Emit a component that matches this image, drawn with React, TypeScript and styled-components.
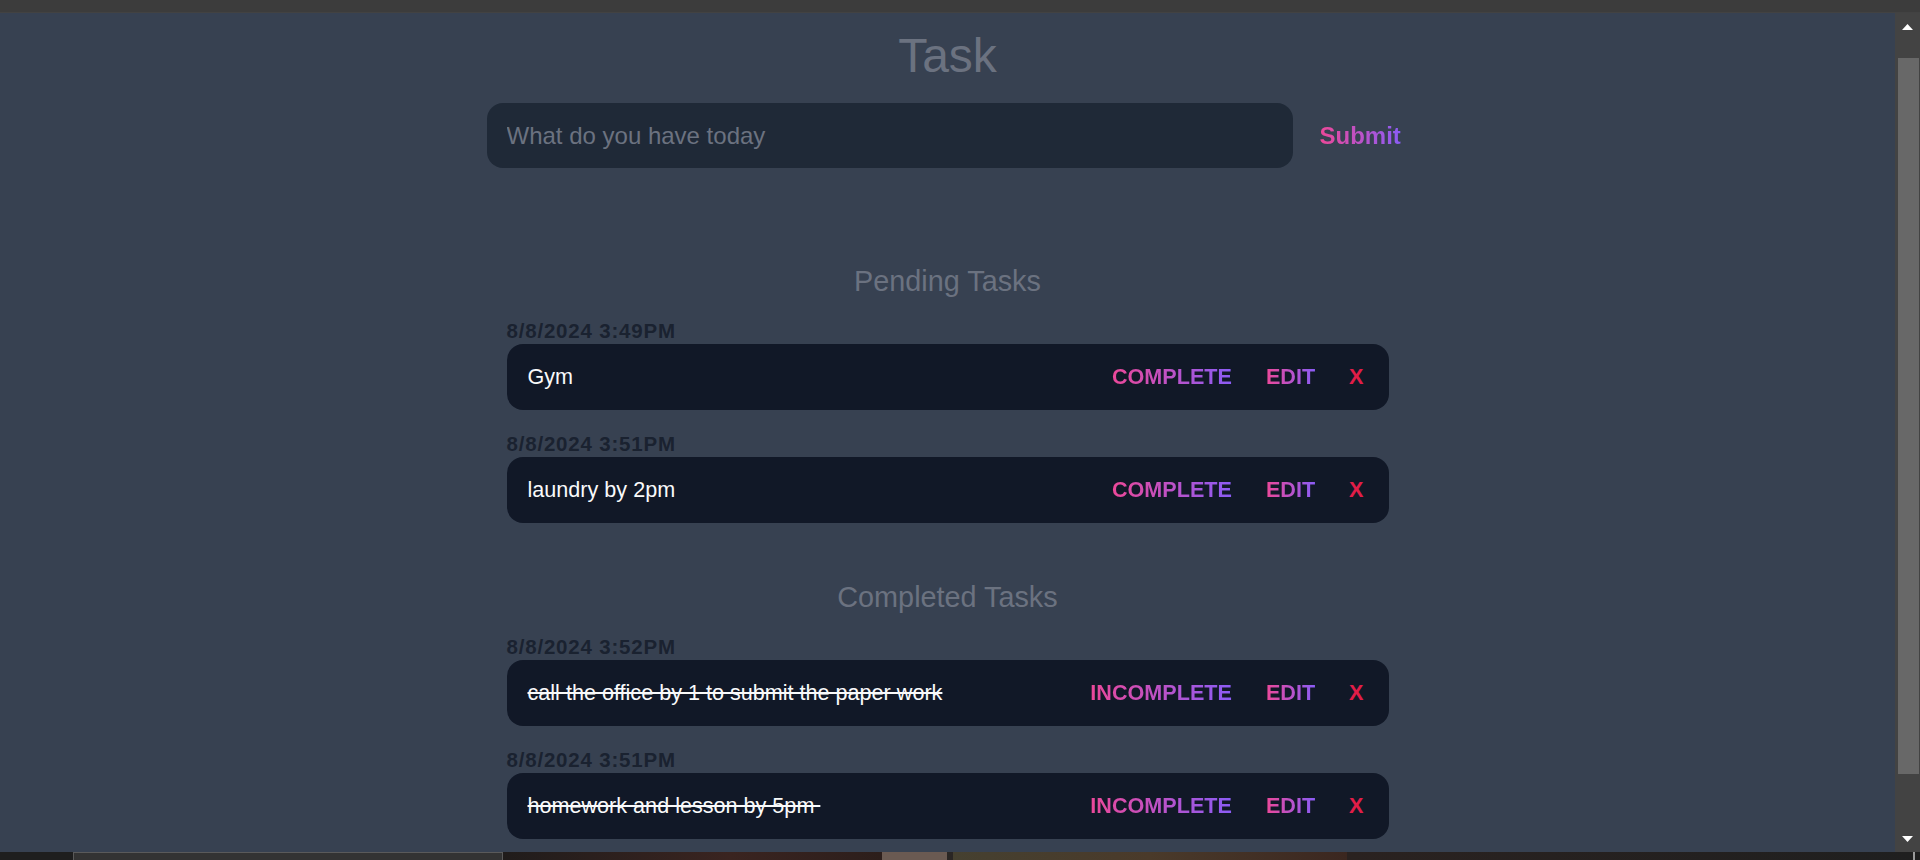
import React from "react";
import styled, { createGlobalStyle } from "styled-components";

const GlobalStyle = createGlobalStyle`
  html, body {
    margin: 0;
    padding: 0;
    overflow: hidden;
    background: #374151;
  }
  body {
    font-family: "Liberation Sans", Arial, Helvetica, sans-serif;
  }
  * { box-sizing: border-box; }
`;

const Frame = styled.div`
  width: 1920px;
  height: 860px;
  display: flex;
  flex-direction: column;
  overflow: hidden;
`;

const TopBar = styled.div`
  height: 13px;
  flex: 0 0 13px;
  background: #3c3c3c;
  border-bottom: 1px solid #424242;
`;

const Middle = styled.div`
  flex: 1 1 auto;
  display: flex;
  min-height: 0;
`;

const Page = styled.main`
  flex: 1 1 auto;
  background: #374151;
  overflow: hidden;
  display: flex;
  flex-direction: column;
  align-items: center;
`;

const Title = styled.h1`
  margin: 19px 0 0;
  font-size: 48px;
  line-height: 48px;
  font-weight: 400;
  color: #6b7280;
`;

const Form = styled.form`
  margin-top: 23px;
  width: 922px;
  display: flex;
  align-items: center;
  gap: 27px;
`;

const Input = styled.input`
  flex: 0 0 806px;
  height: 65px;
  border: none;
  outline: none;
  border-radius: 16px;
  background: #1f2937;
  padding: 0 20px;
  font-family: inherit;
  font-size: 24px;
  color: #e5e7eb;
  &::placeholder { color: #6b7280; }
`;

const GradientButton = styled.button<{ $size?: number }>`
  border: none;
  padding: 0;
  margin: 0;
  cursor: pointer;
  font-family: inherit;
  font-weight: 700;
  font-size: ${(p) => p.$size ?? 21.6}px;
  line-height: 1;
  background: linear-gradient(to right, #ec4899, #8b5cf6);
  -webkit-background-clip: text;
  background-clip: text;
  color: transparent;
`;

const DeleteButton = styled.button`
  border: none;
  padding: 0;
  margin: 0;
  background: none;
  cursor: pointer;
  font-family: inherit;
  font-weight: 700;
  font-size: 21.6px;
  line-height: 1;
  color: #e11d48;
`;

const Section = styled.section<{ $top: number }>`
  margin-top: ${(p) => p.$top}px;
  width: 882px;
  display: flex;
  flex-direction: column;
`;

const SectionTitle = styled.h2`
  margin: 0 0 22px;
  text-align: center;
  font-size: 28.8px;
  line-height: 34px;
  font-weight: 400;
  color: #6b7280;
`;

const TaskList = styled.ul`
  list-style: none;
  margin: 0;
  padding: 0;
  display: flex;
  flex-direction: column;
  gap: 23px;
`;

const TaskItem = styled.li`
  display: flex;
  flex-direction: column;
`;

const DateLabel = styled.div`
  height: 24px;
  font-size: 20.5px;
  line-height: 22px;
  font-weight: 700;
  letter-spacing: 0.8px;
  color: #1a2230;
`;

const Card = styled.div`
  height: 66px;
  border-radius: 16px;
  background: #111827;
  display: flex;
  align-items: center;
  padding: 0 25px 0 21px;
`;

const TaskText = styled.span<{ $done?: boolean }>`
  flex: 1 1 auto;
  font-size: 21.6px;
  color: #f9fafb;
  white-space: pre;
  text-decoration: ${(p) => (p.$done ? "line-through" : "none")};
  text-decoration-thickness: 2px;
`;

const Actions = styled.div`
  display: flex;
  align-items: center;
  gap: 34px;
`;

const ScrollBar = styled.div`
  flex: 0 0 25px;
  background: #434343;
  display: flex;
  flex-direction: column;
  align-items: center;
`;

const ArrowBox = styled.div<{ $h: number; $pad: string }>`
  flex: 0 0 ${(p) => p.$h}px;
  width: 100%;
  display: flex;
  justify-content: center;
  padding: ${(p) => p.$pad};
`;

const Thumb = styled.div`
  width: 21px;
  height: 716px;
  background: #686868;
  margin-left: 2px;
`;

const Spacer = styled.div`
  flex: 1 1 auto;
`;

const Taskbar = styled.div`
  height: 8px;
  flex: 0 0 8px;
  display: flex;
  background: #1f1f1f;
`;

const TaskbarPart = styled.div<{ $w: number; $bg: string; $edge?: boolean }>`
  flex: 0 0 ${(p) => p.$w}px;
  background: ${(p) => p.$bg};
  border-top: ${(p) => (p.$edge ? "1px solid #5a5a5a" : "none")};
  border-left: ${(p) => (p.$edge ? "1px solid #5a5a5a" : "none")};
  border-right: ${(p) => (p.$edge ? "1px solid #5a5a5a" : "none")};
`;

type Task = { date: string; text: string };

const pending: Task[] = [
  { date: "8/8/2024 3:49PM", text: "Gym" },
  { date: "8/8/2024 3:51PM", text: "laundry by 2pm" },
];

const completed: Task[] = [
  { date: "8/8/2024 3:52PM", text: "call the office by 1 to submit the paper work" },
  { date: "8/8/2024 3:51PM", text: "homework and lesson by 5pm " },
];

const Arrow = ({ up }: { up?: boolean }) => (
  <svg width="11" height="6" viewBox="0 0 11 6">
    {up ? <polygon points="5.5,0 11,6 0,6" fill="#fff" /> : <polygon points="0,0 11,0 5.5,6" fill="#fff" />}
  </svg>
);

function TaskRow({ task, done }: { task: Task; done?: boolean }) {
  return (
    <TaskItem>
      <DateLabel>{task.date}</DateLabel>
      <Card>
        <TaskText $done={done}>{task.text}</TaskText>
        <Actions>
          <GradientButton type="button">{done ? "INCOMPLETE" : "COMPLETE"}</GradientButton>
          <GradientButton type="button">EDIT</GradientButton>
          <DeleteButton type="button">X</DeleteButton>
        </Actions>
      </Card>
    </TaskItem>
  );
}

export default function App() {
  return (
    <Frame>
      <GlobalStyle />
      <TopBar />
      <Middle>
        <Page>
          <Title>Task</Title>
          <Form onSubmit={(e) => e.preventDefault()}>
            <Input placeholder="What do you have today" />
            <GradientButton type="submit" $size={24}>Submit</GradientButton>
          </Form>
          <Section $top={96}>
            <SectionTitle>Pending Tasks</SectionTitle>
            <TaskList>
              {pending.map((t, i) => (
                <TaskRow key={i} task={t} />
              ))}
            </TaskList>
          </Section>
          <Section $top={57}>
            <SectionTitle>Completed Tasks</SectionTitle>
            <TaskList>
              {completed.map((t, i) => (
                <TaskRow key={i} task={t} done />
              ))}
            </TaskList>
          </Section>
        </Page>
        <ScrollBar>
          <ArrowBox $h={45} $pad="11px 0 0">
            <Arrow up />
          </ArrowBox>
          <Thumb />
          <Spacer />
          <ArrowBox $h={20} $pad="4px 0 0">
            <Arrow />
          </ArrowBox>
        </ScrollBar>
      </Middle>
      <Taskbar>
        <TaskbarPart $w={73} $bg="#1e1e1e" />
        <TaskbarPart $w={430} $bg="#333333" $edge />
        <TaskbarPart $w={379} $bg="linear-gradient(to right, #201c1b, #3a2420 60%, #2c1e1b)" />
        <TaskbarPart $w={65} $bg="#6a5a52" />
        <TaskbarPart $w={6} $bg="#2a2624" />
        <TaskbarPart $w={394} $bg="linear-gradient(to right, #454030, #4a3a2a 50%, #3b2720)" />
        <TaskbarPart $w={566} $bg="linear-gradient(to right, #2a2220, #1f1f1f)" />
        <TaskbarPart $w={2} $bg="#9a9a9a" />
      </Taskbar>
    </Frame>
  );
}
